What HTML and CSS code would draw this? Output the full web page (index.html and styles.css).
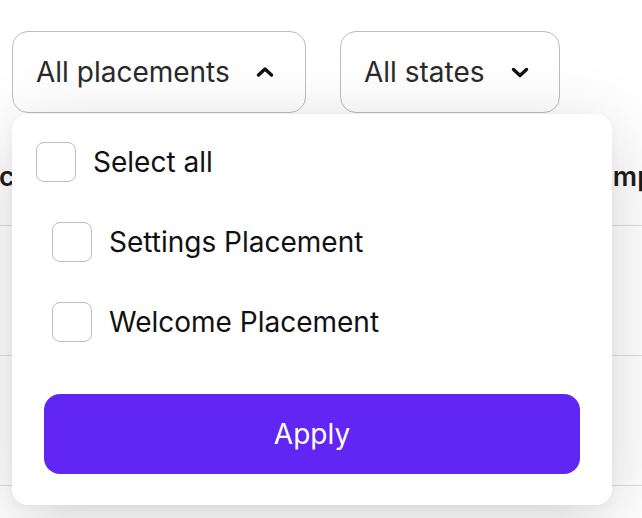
FILE: index.html
```html
<!DOCTYPE html>
<html>
<head>
<meta charset="utf-8">
<link rel="stylesheet" href="styles.css">
</head>
<body>
<div class="page">
  <div class="filters">
    <button class="filter filter-placements">
      <span>All placements</span>
      <svg class="chev" width="18" height="12" viewBox="0 0 18 12"><polyline points="2.5,9 9,3 15.5,9" fill="none" stroke="#111" stroke-width="3.4" stroke-linecap="round" stroke-linejoin="round"/></svg>
    </button>
    <button class="filter filter-states">
      <span>All states</span>
      <svg class="chev" width="18" height="12" viewBox="0 0 18 12"><polyline points="2.5,3.5 9,9.5 15.5,3.5" fill="none" stroke="#111" stroke-width="3.4" stroke-linecap="round" stroke-linejoin="round"/></svg>
    </button>
  </div>
  <div class="table">
    <div class="thead">
      <span class="th th-left">c</span>
      <span class="th th-right">Imp</span>
    </div>
    <div class="row"></div>
    <div class="row"></div>
  </div>

  <div class="popup">
    <label class="opt">
      <span class="box"></span>
      <span class="lbl">Select all</span>
    </label>
    <label class="opt sub">
      <span class="box"></span>
      <span class="lbl">Settings Placement</span>
    </label>
    <label class="opt sub">
      <span class="box"></span>
      <span class="lbl">Welcome Placement</span>
    </label>
    <button class="apply">Apply</button>
  </div>
</div>
</body>
</html>
```

FILE: styles.css
```css
* { box-sizing: border-box; }
html, body {
  margin: 0;
  padding: 0;
  background: #fff;
  font-family: Inter, "Noto Sans", "Liberation Sans", sans-serif;
  overflow: hidden;
}
.page {
  position: relative;
  width: 642px;
  height: 518px;
  overflow: hidden;
}
.filters {
  display: flex;
  gap: 34px;
  padding: 31px 12px 0 12px;
}
.filter {
  display: flex;
  align-items: center;
  gap: 26px;
  height: 82px;
  padding: 0 0 0 23px;
  border: 1.6px solid #bdbdbd;
  border-radius: 16px;
  background: #fff;
  font-family: inherit;
  font-size: 28px;
  color: #2a2a2a;
}
.filter-placements { width: 294px; }
.filter-states { width: 220px; }
.chev { flex: none; display: block; }

.thead {
  height: 113px;
  display: flex;
  justify-content: space-between;
  align-items: flex-end;
  padding-bottom: 32px;
  border-bottom: 1.5px solid #dedede;
  font-size: 27px;
  font-weight: 600;
  color: #1d1d1d;
}
.th-left { margin-left: -1px; }
.th-right { margin-right: -12px; }
.row {
  height: 130px;
  border-bottom: 1.5px solid #dedede;
}

.popup {
  position: absolute;
  top: 114px;
  left: 12px;
  width: 600px;
  height: 391px;
  background: #fff;
  border-radius: 16px;
  padding: 28px 24px 31px 24px;
  display: flex;
  flex-direction: column;
  gap: 40px;
  box-shadow: 0 16px 70px rgba(0, 0, 0, 0.17), 0 2px 10px rgba(0, 0, 0, 0.04);
}
.opt {
  display: flex;
  align-items: center;
  gap: 17px;
  height: 40px;
}
.opt.sub { padding-left: 16px; }
.box {
  width: 40px;
  height: 40px;
  border: 1.8px solid #bfbfbf;
  border-radius: 8px;
  background: #fff;
  flex: none;
}
.lbl {
  font-size: 28px;
  color: #111;
}
.apply {
  margin: 12px 8px 0 8px;
  height: 80px;
  border: none;
  border-radius: 16px;
  background: #6125f4;
  color: #fff;
  font-family: inherit;
  font-size: 28px;
}
```
